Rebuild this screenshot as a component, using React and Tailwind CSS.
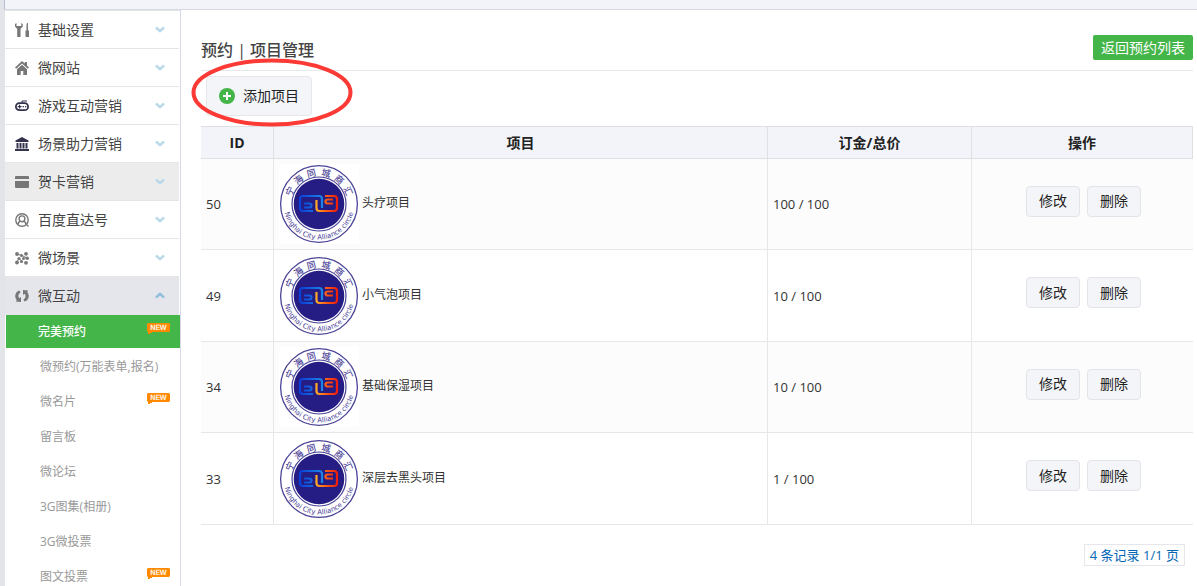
import React from 'react';

const menu = [
  { label: '基础设置', icon: 'tools' },
  { label: '微网站', icon: 'home' },
  { label: '游戏互动营销', icon: 'game', dark: true },
  { label: '场景助力营销', icon: 'bank', dark: true },
  { label: '贺卡营销', icon: 'card', hover: true },
  { label: '百度直达号', icon: 'user' },
  { label: '微场景', icon: 'nodes' },
  { label: '微互动', icon: 'sync', open: true },
];

const subMenu = [
  { label: '微预约(万能表单,报名)' },
  { label: '微名片', isNew: true },
  { label: '留言板' },
  { label: '微论坛' },
  { label: '3G图集(相册)' },
  { label: '3G微投票' },
  { label: '图文投票', isNew: true },
];

const projects = [
  { id: 50, name: '头疗项目', price: '100 / 100' },
  { id: 49, name: '小气泡项目', price: '10 / 100' },
  { id: 34, name: '基础保湿项目', price: '10 / 100' },
  { id: 33, name: '深层去黑头项目', price: '1 / 100' },
];

const MenuIcon = ({ name }) => {
  const shapes = {
    tools: (
      <g>
        <path d="M0 1v2.500L2.200 6v8h3.300V6l2.300-2.500V1L6.300 0v3H1.500V0z" />
        <path d="M12 0h1v7.500h1V14h-3.500V7.500h1V2z" />
      </g>
    ),
    home: (
      <path d="M7 0L0 6.500l1.200 1.300L7 2.500l5.800 5.300L14 6.500l-2-1.900V1H9.800v1.600zM7 3.700L2 8.300V14h3.700v-4h2.600v4H12V8.300z" />
    ),
    game: (
      <g>
        <path d="M7 4V2h5" fill="none" stroke="currentColor" strokeWidth="1" />
        <rect x="0.900" y="4.200" width="12.200" height="7" rx="3.500" fill="none" stroke="currentColor" strokeWidth="1.800" />
        <path d="M4 5.800h1.200V7h1.300v1.200H5.200v1.200H4V8.200H2.700V7H4zM7.600 7h1.300v1.200H7.600zM10 7h1.300v1.200H10z" />
      </g>
    ),
    bank: (
      <path d="M7 0l6.500 3.500V5H.5V3.500zM1.500 6h2v5.500h-2zM4.500 6h2v5.500h-2zM7.500 6h2v5.500h-2zM10.500 6h2v5.500h-2zM0 12h14v2H0z" />
    ),
    card: <path d="M1 1h12a1 1 0 0 1 1 1v2H0V2a1 1 0 0 1 1-1zM0 6h14v6a1 1 0 0 1-1 1H1a1 1 0 0 1-1-1z" />,
    user: (
      <g fill="none" stroke="currentColor" strokeWidth="1.400">
        <circle cx="7" cy="7" r="6.200" />
        <circle cx="7" cy="5.800" r="2.900" />
        <path d="M3 11.500c.3-2 1.500-3 2.500-3.200M11 11.500c-.3-2-1.500-3-2.500-3.200M11 11l2.500 2.500" />
      </g>
    ),
    nodes: (
      <g>
        <path d="M2 3l5 1.500M2 11l2-3.500 3 3M7 4.500L12 7" stroke="currentColor" fill="none" />
        <circle cx="2" cy="3" r="1.900" />
        <circle cx="6.500" cy="4.500" r="1.600" />
        <circle cx="11" cy="2.800" r="1.900" />
        <circle cx="4" cy="7.500" r="1.600" />
        <circle cx="12.200" cy="7.200" r="1.800" />
        <circle cx="8.500" cy="7.500" r="1.500" />
        <circle cx="2" cy="11.500" r="1.900" />
        <circle cx="6.500" cy="10.500" r="1.600" />
        <circle cx="11" cy="11.800" r="1.900" />
      </g>
    ),
    sync: (
      <g>
        <path d="M4.500 1.500C0 2.500-1 8 1.800 11L.8 12.500l5.200.5V8L4.300 9.300C3 8 3 5 5.500 3.500z" />
        <path d="M9.500 12.500c4.500-1 5.500-6.500 2.700-9.500l1-1.500L8 1v5l1.700-1.300C11 6 11 9 8.500 10.500z" />
      </g>
    ),
  };
  return (
    <svg width="14" height="14" viewBox="0 0 14 14" fill="currentColor" aria-hidden="true">
      {shapes[name]}
    </svg>
  );
};

const Arrow = ({ up }) => (
  <svg width="10" height="7" viewBox="0 0 10 7" fill="none" strokeWidth="2.4" className={up ? 'stroke-[#8fbfdc]' : 'stroke-[#b9d9ea]'} aria-hidden="true">
    <path d={up ? 'M1 5.500L5 1.800l4 3.700' : 'M1 1.500l4 3.700 4-3.700'} />
  </svg>
);

const NewBadge = () => (
  <svg width="23" height="12" viewBox="0 0 23 12" className="mb-1.5">
    <path d="M1 0h21l1 1v7l-1 1H5v1H3v1H1V9L0 8V1z" fill="#ff8a00" />
    <text x="11.500" y="7" textAnchor="middle" fontSize="7" fill="#fff" stroke="#fff" strokeWidth="0.200" fontFamily="DejaVu Sans, sans-serif">NEW</text>
  </svg>
);

// Round shop badge shown in front of every project name
const ring = [
  { ch: '宁', a: -66 },
  { ch: '海', a: -40 },
  { ch: '同', a: -14 },
  { ch: '城', a: 13 },
  { ch: '商', a: 40 },
  { ch: '汇', a: 66 },
];

const ShopLogo = ({ id }) => (
  <svg width="80" height="80" viewBox="0 0 80 80" className="shrink-0">
    <defs>
      <linearGradient id={`blue${id}`} gradientUnits="userSpaceOnUse" x1="21" x2="44" y1="0" y2="0">
        <stop offset="0" stopColor="#0b3fd8" />
        <stop offset="1" stopColor="#1c86e8" />
      </linearGradient>
      <linearGradient id={`red${id}`} gradientUnits="userSpaceOnUse" x1="36" x2="59" y1="0" y2="0">
        <stop offset="0" stopColor="#ffb52a" />
        <stop offset="0.500" stopColor="#fb5a14" />
        <stop offset="1" stopColor="#f01808" />
      </linearGradient>
    </defs>
    <rect width="80" height="80" fill="#fff" />
    <circle cx="40" cy="40" r="38.400" fill="none" stroke="#4b4497" strokeWidth="1.300" />
    <circle cx="40" cy="40" r="27" fill="none" stroke="#4b4497" strokeWidth="1.200" />
    <circle cx="40" cy="40" r="25.300" fill="#251d83" />
    {ring.map((r) => (
      <text key={r.ch} x="40" y="11.500" textAnchor="middle" fontSize="9" fontWeight="500" fill="#4b4497" transform={`rotate(${r.a} 40 40)`}>{r.ch}</text>
    ))}
    <path id={`arc${id}`} d="M4.500 40a35.500 35.500 0 0 0 71 0" fill="none" />
    <text fontSize="7" fill="#4b4497" fontFamily="DejaVu Sans, sans-serif">
      <textPath href={`#arc${id}`} startOffset="50%" textAnchor="middle">Ninghai City Alliance circle</textPath>
    </text>
    <g fill="none" strokeWidth="2.200" strokeLinejoin="round">
      <path d="M34 47H24q-3 0-3-3v-9q0-3 3-3h16q3 0 3 3v9M25 39.500h5q2.500 0 2.500 2t-2.500 2h-5" stroke={`url(#blue${id})`} />
      <path d="M37.500 36v8q0 3 3 3H55q3 0 3-3v-9q0-3-3-3h-9M54 39.500h-5q-2.500 0-2.500-2t2.500-2h5" stroke={`url(#red${id})`} />
    </g>
  </svg>
);

const Sidebar = () => (
  <nav className="w-44 shrink-0 border-r border-[#d5dae6] bg-white">
    <ul className="border-t border-[#e3e4e8]">
      {menu.map((item) => (
        <li key={item.label} className="pr-px">
          <a
            href="#"
            className={`flex h-[38px] items-center border-b border-[#e5e5e8] pr-3.5 pl-2.5 text-sm text-[#444] ${
              item.open ? 'bg-[#e4e6ec]' : item.hover ? 'bg-[#ececec]' : 'bg-white'
            }`}
          >
            <span className={item.dark ? 'text-[#33334d]' : 'text-[#777]'}>
              <MenuIcon name={item.icon} />
            </span>
            <span className="ml-[9px] flex-1">{item.label}</span>
            <Arrow up={item.open} />
          </a>
        </li>
      ))}
    </ul>
    <ul className="text-xs text-[#999]">
      <li className="mb-px">
        <a href="#" className="ml-px flex h-[33px] items-center justify-between bg-[#44b549] pr-2.5 pl-8 font-medium text-white">
          完美预约
          <NewBadge />
        </a>
      </li>
      {subMenu.map((item) => (
        <li key={item.label}>
          <a href="#" className="flex h-[35px] items-center justify-between pr-2.5 pl-[35px]">
            {item.label}
            {item.isNew && <NewBadge />}
          </a>
        </li>
      ))}
    </ul>
  </nav>
);

const App = () => {
  return (
    <div className="h-screen overflow-hidden bg-[#e2e4ea] pl-1 font-['Open_Sans','Noto_Sans_CJK_SC',sans-serif] text-[#333]">
      {/* Top bar */}
      <div className="h-2.5 border-b border-l border-b-[#d7dae2] border-l-[#b8bfcc] bg-[#f3f4f9]" />

      <div className="flex pl-px">
        <Sidebar />

        <main className="min-h-screen min-w-0 flex-1 bg-white pt-6 pr-1 pl-5">
          <div className="flex h-[37px] items-start justify-between border-b border-[#e7e7eb]">
            <h1 className="pt-1 text-base font-medium text-[#444]">预约 | 项目管理</h1>
            <a href="#" className="mt-px rounded-xs bg-[#44b549] px-2 text-sm leading-[25px] text-white">返回预约列表</a>
          </div>

          <div className="relative mt-[5px] mb-2.5 flex pl-[5px]">
            <button type="button" className="flex h-10 items-center gap-2 rounded-sm border border-[#e7e7eb] bg-[#f4f5f9] px-3 text-sm text-[#222]">
              <svg width="16" height="16" viewBox="0 0 16 16" aria-hidden="true">
                <circle cx="8" cy="8" r="8" fill="#44b549" />
                <path d="M8 4v8M4 8h8" stroke="#fff" strokeWidth="2" />
              </svg>
              添加项目
            </button>
            <svg width="162" height="70" viewBox="0 0 162 70" className="pointer-events-none absolute -top-[18px] -left-2.5" aria-hidden="true">
              <ellipse cx="81" cy="34.500" rx="78.500" ry="32" fill="none" stroke="#fb3a36" strokeWidth="4" />
            </svg>
          </div>

          <table className="w-full table-fixed border-separate border-spacing-0 text-[13px]">
            <thead>
              <tr className="h-[33px] bg-[#f3f4f9] text-sm text-[#222]">
                <th className="w-[73px] border-y border-r border-[#dfe0e4] font-bold">ID</th>
                <th className="border-y border-r border-[#dfe0e4] font-bold">项目</th>
                <th className="w-[204px] border-y border-r border-[#dfe0e4] font-bold">订金/总价</th>
                <th className="w-[221px] border-y border-r border-[#dfe0e4] font-bold">操作</th>
              </tr>
            </thead>
            <tbody>
              {projects.map((p) => (
                <tr key={p.id} className="odd:h-[91px] odd:bg-[#fcfcfc] even:h-[92px]">
                  <td className="border-r border-b border-[#e7e7eb] pt-0.5 pl-[5px]">{p.id}</td>
                  <td className="border-r border-b border-[#e7e7eb] pl-[5px] text-xs">
                    <div className="flex items-center gap-[3px]">
                      <ShopLogo id={p.id} />
                      <span className="pb-0.5">{p.name}</span>
                    </div>
                  </td>
                  <td className="border-r border-b border-[#e7e7eb] pt-0.5 pl-[5px]">{p.price}</td>
                  <td className="border-b border-[#e7e7eb] pl-0.5">
                    <div className="flex justify-center gap-[7px] pb-1.5 text-sm text-[#222]">
                      <button type="button" className="h-[31px] w-[54px] rounded-sm border border-[#e3e4ea] bg-[#f4f5f9]">修改</button>
                      <button type="button" className="h-[31px] w-[54px] rounded-sm border border-[#e3e4ea] bg-[#f4f5f9]">删除</button>
                    </div>
                  </td>
                </tr>
              ))}
            </tbody>
          </table>

          <div className="mt-[19px] flex justify-end pr-2">
            <span className="border border-[#e7e7eb] px-[5px] text-[13px] leading-5 text-[#0066b3]">4 条记录 1/1 页</span>
          </div>
        </main>
      </div>
    </div>
  );
};

export default App;
